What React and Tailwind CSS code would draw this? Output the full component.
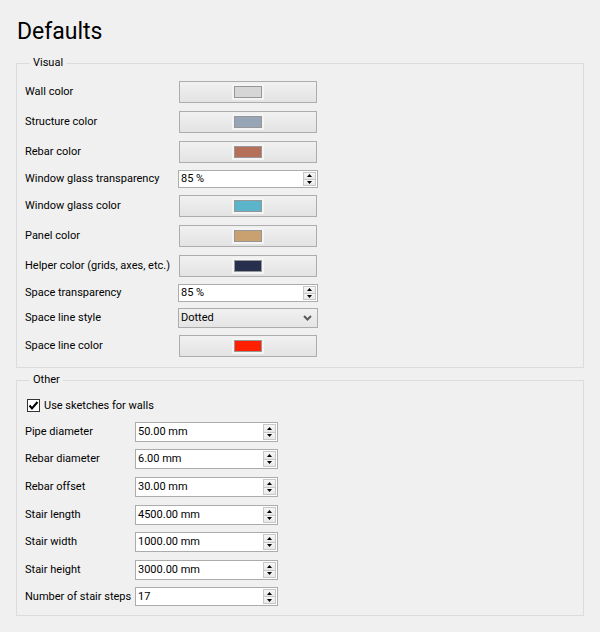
const font = { fontFamily: 'Roboto, "Noto Sans", sans-serif' };

const visualRows = [
  { label: 'Wall color', kind: 'color', swatch: 'bg-[#d6d6d6]', mt: 'mt-[10px]' },
  { label: 'Structure color', kind: 'color', swatch: 'bg-[#97a6b6]', mt: 'mt-[8px]' },
  { label: 'Rebar color', kind: 'color', swatch: 'bg-[#b5705a]', mt: 'mt-[8px]' },
  { label: 'Window glass transparency', kind: 'spin', value: '85 %', mt: 'mt-[7px]' },
  { label: 'Window glass color', kind: 'color', swatch: 'bg-[#5ab5ca]', mt: 'mt-[7px]' },
  { label: 'Panel color', kind: 'color', swatch: 'bg-[#c9a06f]', mt: 'mt-[8px]' },
  { label: 'Helper color (grids, axes, etc.)', kind: 'color', swatch: 'bg-[#272f4f]', mt: 'mt-[8px]' },
  { label: 'Space transparency', kind: 'spin', value: '85 %', mt: 'mt-[7px]' },
  { label: 'Space line style', kind: 'combo', value: 'Dotted', mt: 'mt-[6px]' },
  { label: 'Space line color', kind: 'color', swatch: 'bg-[#ff2000]', mt: 'mt-[7px]' },
];

const otherRows = [
  { label: 'Pipe diameter', value: '50.00 mm', mt: 'mt-[10px]', h: 'h-[20px]' },
  { label: 'Rebar diameter', value: '6.00 mm', mt: 'mt-[7px]', h: 'h-[20px]' },
  { label: 'Rebar offset', value: '30.00 mm', mt: 'mt-[8px]', h: 'h-[20px]' },
  { label: 'Stair length', value: '4500.00 mm', mt: 'mt-[8px]', h: 'h-[20px]' },
  { label: 'Stair width', value: '1000.00 mm', mt: 'mt-[7px]', h: 'h-[20px]' },
  { label: 'Stair height', value: '3000.00 mm', mt: 'mt-[8px]', h: 'h-[20px]' },
  { label: 'Number of stair steps', value: '17', mt: 'mt-[7px]', h: 'h-[19px]' },
];

function ColorButton({ swatch }) {
  return (
    <button className="ml-[1px] flex h-[22px] w-[138px] items-center justify-center border border-[#adadad] bg-linear-to-b from-[#f1f1f1] to-[#e3e3e3]">
      <span className="flex bg-[#f4f4f4] p-[2px]">
        <span className={`h-[12px] w-[28px] border border-[#979797] ${swatch}`} />
      </span>
    </button>
  );
}

function SpinBox({ value, width, height }) {
  return (
    <div className={`flex border border-[#acacac] bg-white ${width} ${height}`}>
      <span className="flex flex-1 items-center pl-[2px] pt-[1px] text-black">{value}</span>
      <div className="m-[1px] flex w-[13px] flex-col border border-[#c8c8c8] bg-[#f0f0f0]">
        <div className="flex flex-1 items-center justify-center border-b border-[#c8c8c8] bg-linear-to-b from-[#f6f6f6] to-[#e8e8e8]">
          <svg width="5" height="3" viewBox="0 0 5 3">
            <polygon points="2.5,0 5,3 0,3" fill="#000" />
          </svg>
        </div>
        <div className="flex flex-1 items-center justify-center bg-linear-to-b from-[#f6f6f6] to-[#e8e8e8]">
          <svg width="5" height="3" viewBox="0 0 5 3">
            <polygon points="0,0 5,0 2.5,3" fill="#000" />
          </svg>
        </div>
      </div>
    </div>
  );
}

function Combo({ value }) {
  return (
    <div className="flex h-[20px] w-[140px] items-center justify-between border border-[#acacac] bg-linear-to-b from-[#f1f1f1] to-[#e5e5e5] pl-[2px] pr-[5px]">
      <span className="pt-[1px]">{value}</span>
      <svg width="9" height="6" viewBox="0 0 9 6">
        <polyline points="1,1 4.5,4.5 8,1" fill="none" stroke="#5c5c5c" strokeWidth="2" />
      </svg>
    </div>
  );
}

function Group({ title, className, children }) {
  return (
    <fieldset className={`w-[568px] border border-[#dcdcdc] pl-[8px] ${className}`}>
      <legend className="ml-[5px] px-[3px] text-[11px] leading-[16px]">{title}</legend>
      {children}
    </fieldset>
  );
}

export default function App() {
  return (
    <div className="h-[632px] w-[600px] bg-[#f0f0f0] pl-[16px] text-[11px] text-black" style={font}>
      <div className="pt-[18px] pl-[1px] text-[23px] leading-[28px]">Defaults</div>

      <Group title="Visual" className="mt-[9px] pb-[10px]">
        <div className="flex flex-col">
          {visualRows.map((row) => (
            <div key={row.label} className={`flex items-center ${row.mt}`}>
              <span className="w-[153px] shrink-0 pt-[1px]">{row.label}</span>
              {row.kind === 'color' && <ColorButton swatch={row.swatch} />}
              {row.kind === 'spin' && <SpinBox value={row.value} width="w-[140px]" height="h-[18px]" />}
              {row.kind === 'combo' && <Combo value={row.value} />}
            </div>
          ))}
        </div>
      </Group>

      <Group title="Other" className="mt-[4px] pb-[9px]">
        <div className="flex flex-col">
          <label className="mt-[11px] flex h-[13px] items-center gap-[4px] pl-[2px]">
            <span className="flex h-[13px] w-[13px] items-center justify-center border border-[#333] bg-white">
              <svg width="11" height="11" viewBox="0 0 11 11">
                <path d="M1.5 5.5 L4 8.5 L9.5 2" fill="none" stroke="#000" strokeWidth="2" />
              </svg>
            </span>
            <span className="pt-[1px]">Use sketches for walls</span>
          </label>
          {otherRows.map((row) => (
            <div key={row.label} className={`flex items-center ${row.mt}`}>
              <span className="w-[110px] shrink-0 pt-[1px]">{row.label}</span>
              <SpinBox value={row.value} width="w-[143px]" height={row.h} />
            </div>
          ))}
        </div>
      </Group>
    </div>
  );
}
